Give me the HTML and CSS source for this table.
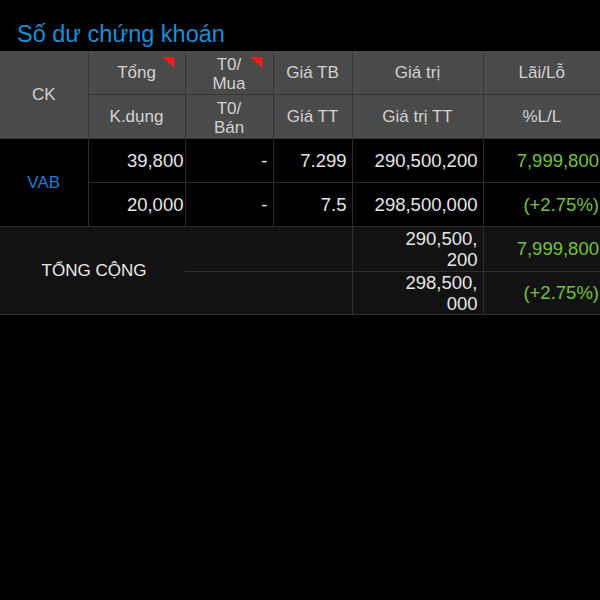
FILE: index.html
```html
<!DOCTYPE html>
<html lang="vi">
<head>
<meta charset="utf-8">
<title>Số dư chứng khoán</title>
<link rel="stylesheet" href="styles.css">
</head>
<body>
<h1 class="title">Số dư chứng khoán</h1>
<table class="grid">
  <colgroup>
    <col class="c1"><col class="c2"><col class="c3"><col class="c4"><col class="c5"><col class="c6">
  </colgroup>
  <thead>
    <tr>
      <th rowspan="2">CK</th>
      <th class="flag">Tổng<svg class="tri" width="13" height="11" viewBox="0 0 13 11"><polygon points="0,0 12,0 13,11" fill="#ff1a1a"/></svg></th>
      <th class="flag two">T0/<br>Mua<svg class="tri" width="13" height="11" viewBox="0 0 13 11"><polygon points="0,0 12,0 13,11" fill="#ff1a1a"/></svg></th>
      <th>Giá TB</th>
      <th>Giá trị</th>
      <th>Lãi/Lỗ</th>
    </tr>
    <tr>
      <th>K.dụng</th>
      <th class="two">T0/<br>Bán</th>
      <th>Giá TT</th>
      <th>Giá trị TT</th>
      <th>%L/L</th>
    </tr>
  </thead>
  <tbody class="data">
    <tr>
      <td rowspan="2" class="sym">VAB</td>
      <td class="num tight">39,800</td>
      <td class="num">-</td>
      <td class="num">7.299</td>
      <td class="num">290,500,200</td>
      <td class="num up tight">7,999,800</td>
    </tr>
    <tr>
      <td class="num tight">20,000</td>
      <td class="num">-</td>
      <td class="num">7.5</td>
      <td class="num">298,500,000</td>
      <td class="num up tight">(+2.75%)</td>
    </tr>
  </tbody>
  <tbody class="total">
    <tr>
      <td rowspan="2" colspan="2" class="label">TỔNG CỘNG</td>
      <td colspan="2" class="blank"></td>
      <td class="num wrap">290,500,<br>200</td>
      <td class="num up tight">7,999,800</td>
    </tr>
    <tr>
      <td colspan="2" class="blank"></td>
      <td class="num wrap">298,500,<br>000</td>
      <td class="num up tight">(+2.75%)</td>
    </tr>
  </tbody>
</table>
</body>
</html>
```

FILE: styles.css
```css
html, body {
  margin: 0;
  padding: 0;
  background: #000;
  width: 600px;
  height: 600px;
  overflow: hidden;
  font-family: "Liberation Sans", Arial, sans-serif;
}

.title {
  margin: 0;
  padding: 20px 0 0 17px;
  height: 31px;
  font-size: 23.5px;
  font-weight: normal;
  line-height: 28px;
  color: #1a8ed6;
}

.grid {
  width: 600px;
  table-layout: fixed;
  border-collapse: collapse;
}

.c1 { width: 88px; }
.c2 { width: 97px; }
.c3 { width: 88px; }
.c4 { width: 79px; }
.c5 { width: 131px; }
.c6 { width: 117px; }

thead th {
  background: #4a4a4a;
  color: #d2d2d2;
  font-weight: normal;
  font-size: 17px;
  line-height: 19px;
  height: 41px;
  padding: 0;
  text-align: center;
  vertical-align: middle;
  border: 1px solid #363636;
  position: relative;
}

thead th:last-child { border-right: none; }
thead tr:first-child th { border-top: none; }
thead th:first-child { border-left: none; }

.tri {
  position: absolute;
  top: 6px;
  right: 10px;
}

.two { padding-top: 2px; }

td {
  padding: 0 5px 0 0;
  font-size: 18.5px;
  color: #e6e6e6;
  vertical-align: middle;
  white-space: nowrap;
}

.data td {
  height: 43px;
  background: #000;
  border: 1px solid #2c2c2c;
  border-top: none;
}

.data td:last-child { border-right: none; }
.data td.sym { border-left: none; }

.num { text-align: right; }
.tight { padding-right: 1px; }
.up { color: #74c23e; }

.sym {
  text-align: center;
  color: #1f7ad3;
  font-size: 17px;
  padding: 0;
}

.total td {
  background: #121212;
  height: 42px;
  border: 1px solid #2e2e2e;
  border-top: none;
}

.total tr:first-child td { height: 44px; }
.total td:last-child { border-right: none; }
.total td.label {
  border-left: none;
  border-right: none;
  text-align: center;
  font-size: 17px;
  color: #ececec;
  padding: 0 0 0 3px;
}
.total td.blank { border-left: none; }

.wrap {
  line-height: 21px;
  white-space: normal;
}
```
